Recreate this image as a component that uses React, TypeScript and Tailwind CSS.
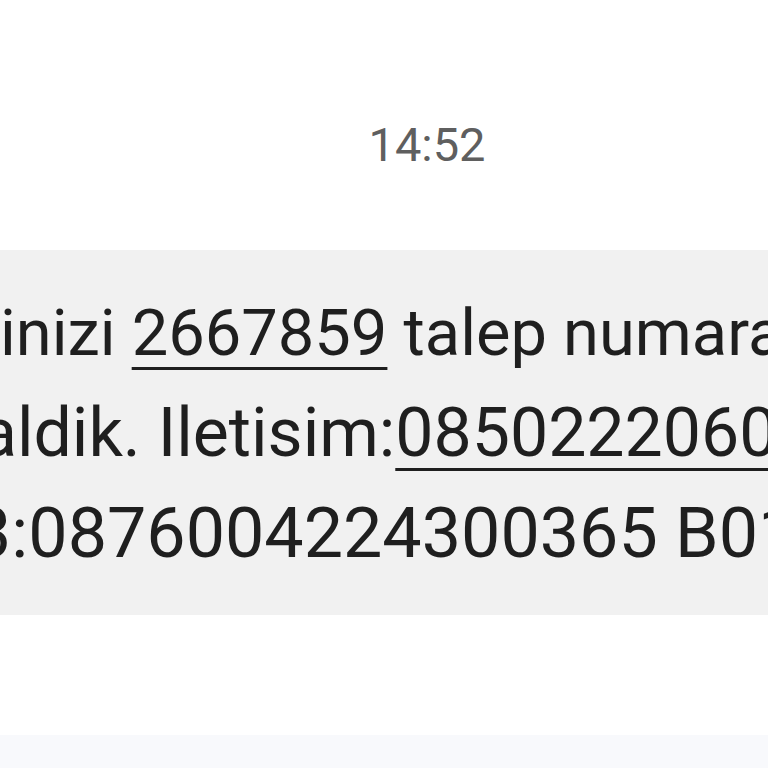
import React from 'react';

const App: React.FC = () => {
  return (
    <div className="h-[768px] w-[768px] overflow-hidden bg-white flex flex-col font-['Roboto','Liberation_Sans',sans-serif]">
      <div className="h-[121px]" />
      <div className="flex justify-center pl-[86px]">
        <span className="text-[47px] leading-[48px] text-[#5f5f5f]">14:52</span>
      </div>

      <div className="mt-[81px] bg-[#f1f1f1] pt-[33px] pb-[32px] overflow-hidden leading-[100px] text-[#1f1f1f]">
        <p className="whitespace-nowrap text-[65px]">
          inizi{' '}
          <span className="underline decoration-[3px] underline-offset-[12px]">2667859</span>{' '}
          talep numarasi ile
        </p>
        <p className="whitespace-nowrap text-[68px] -ml-[20px]">
          aldik. Iletisim:
          <span className="underline decoration-[3px] underline-offset-[12px]">08502220600</span>
        </p>
        <p className="whitespace-nowrap text-[70px] -ml-[28px]">3:0876004224300365 B01</p>
      </div>

      <div className="flex-1" />
      <div className="h-[33px] bg-[#f8f9fc]" />
    </div>
  );
};

export default App;
